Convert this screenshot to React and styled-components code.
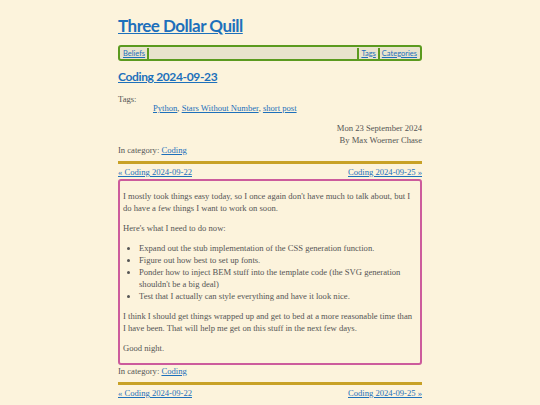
import React from 'react'
import styled, { createGlobalStyle } from 'styled-components'

const GlobalStyle = createGlobalStyle`
  html, body {
    margin: 0;
    padding: 0;
    background-color: #fcf3dc;
  }
  body {
    font-family: "Liberation Serif", serif;
    color: #555;
  }
  a {
    color: #1d70bb;
  }
`

const Page = styled.div`
  width: 304px;
  margin: 0 auto;
  padding-top: 14px;
  font-size: 8.6px;
  line-height: 12px;
`

const SiteTitle = styled.h1`
  font-family: Lato, sans-serif;
  font-weight: 700;
  font-size: 17px;
  letter-spacing: -0.5px;
  line-height: 24px;
  margin: 0 0 7px;
`

const Nav = styled.nav`
  display: flex;
  align-items: center;
  height: 12px;
  border: 2px solid #5b9a1f;
  border-radius: 3px;
  background-color: #e9e3cd;
  padding: 0 1px;
  font-family: Lato, sans-serif;
  font-size: 7.5px;
`

const NavLink = styled.a`
  padding: 0 2px;
  border-right: ${p => (p.$sepRight ? '2px solid #5b9a1f' : 'none')};
  border-left: ${p => (p.$sepLeft ? '2px solid #5b9a1f' : 'none')};
  line-height: 11px;
`

const NavSpacer = styled.div`
  flex-grow: 1;
`

const PostTitle = styled.h2`
  font-family: Lato, sans-serif;
  font-weight: 700;
  font-size: 12px;
  letter-spacing: -0.35px;
  line-height: 16px;
  margin: 8px 0 10px;
`

const TagLabel = styled.div`
  line-height: 5px;
  padding-top: 2px;
`

const TagList = styled.div`
  padding-left: 35px;
  margin-bottom: 8px;
`

const Byline = styled.div`
  text-align: right;
  margin-bottom: -2px;
`

const Category = styled.div``

const Rule = styled.hr`
  border: none;
  border-top: 3px solid #c8a126;
  margin: 5px 0 2px;
`

const PrevNext = styled.div`
  display: flex;
  justify-content: space-between;
`

const PostBody = styled.div`
  border: 2px solid #cc5b9c;
  border-radius: 3px;
  padding: 1px 3px 1px;
  margin-top: 1px;

  p {
    margin: 8px 0;
  }

  ul {
    margin: 7px 0;
    padding-left: 16px;
  }
`

export default function App() {
  return (
    <>
      <GlobalStyle />
      <Page>
        <SiteTitle><a href="#">Three Dollar Quill</a></SiteTitle>
        <Nav>
          <NavLink href="#" $sepRight>Beliefs</NavLink>
          <NavSpacer />
          <NavLink href="#" $sepLeft>Tags</NavLink>
          <NavLink href="#" $sepLeft>Categories</NavLink>
        </Nav>
        <PostTitle><a href="#">Coding 2024-09-23</a></PostTitle>
        <TagLabel>Tags:</TagLabel>
        <TagList>
          <a href="#">Python</a>, <a href="#">Stars Without Number</a>, <a href="#">short post</a>
        </TagList>
        <Byline>
          <div>Mon 23 September 2024</div>
          <div>By Max Woerner Chase</div>
        </Byline>
        <Category>In category: <a href="#">Coding</a></Category>
        <Rule />
        <PrevNext>
          <a href="#">« Coding 2024-09-22</a>
          <a href="#">Coding 2024-09-25 »</a>
        </PrevNext>
        <PostBody>
          <p>I mostly took things easy today, so I once again don't have much to talk about, but I do have a few things I want to work on soon.</p>
          <p>Here's what I need to do now:</p>
          <ul>
            <li>Expand out the stub implementation of the CSS generation function.</li>
            <li>Figure out how best to set up fonts.</li>
            <li>Ponder how to inject BEM stuff into the template code (the SVG generation shouldn't be a big deal)</li>
            <li>Test that I actually can style everything and have it look nice.</li>
          </ul>
          <p>I think I should get things wrapped up and get to bed at a more reasonable time than I have been. That will help me get on this stuff in the next few days.</p>
          <p>Good night.</p>
        </PostBody>
        <Category>In category: <a href="#">Coding</a></Category>
        <Rule />
        <PrevNext>
          <a href="#">« Coding 2024-09-22</a>
          <a href="#">Coding 2024-09-25 »</a>
        </PrevNext>
      </Page>
    </>
  )
}
